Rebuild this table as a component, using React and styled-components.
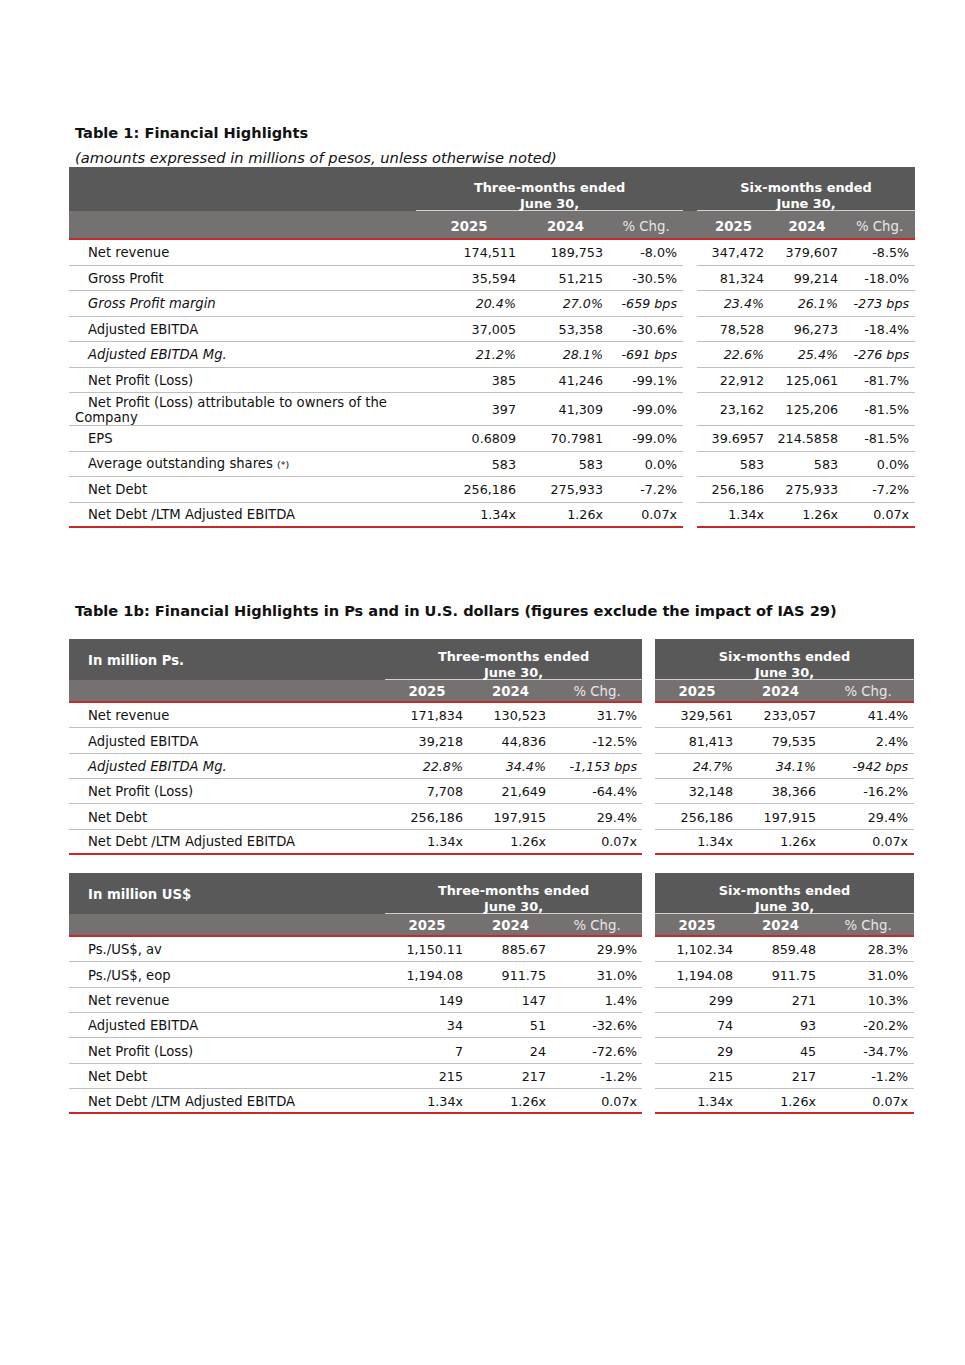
import React from "react";
import styled, { createGlobalStyle, css } from "styled-components";

const GlobalStyle = createGlobalStyle`
  html, body { margin: 0; padding: 0; background: #fff; }
  body { font-family: "DejaVu Sans", Verdana, sans-serif; color: #111; }
`;

const DARK = "#595959";
const LIGHT = "#767171";
const RED = "#c8282a";
const RULE = "#bfbfbf";

const Page = styled.div`
  width: 965px;
  min-height: 1365px;
  box-sizing: border-box;
  padding: 124px 50px 0 69px;
`;

const Title = styled.div`
  font-weight: bold;
  font-size: 14.6px;
  line-height: 18px;
  padding-left: 6px;
  white-space: nowrap;
  margin-top: ${(p) => p.$top || 0}px;
`;

const Subtitle = styled.div`
  font-style: italic;
  font-size: 14.7px;
  line-height: 18px;
  padding-left: 6px;
  white-space: nowrap;
  margin-top: 7px;
`;

const Table = styled.table`
  border-collapse: separate;
  border-spacing: 0;
  table-layout: fixed;
  font-size: 12.7px;
  width: ${(p) => p.$width}px;
`;

const DarkRow = styled.tr`
  background: ${DARK};
  height: ${(p) => p.$h}px;
`;

const LightRow = styled.tr`
  background: ${LIGHT};
  height: ${(p) => p.$h}px;
`;

const GroupHead = styled.th`
  color: #fff;
  font-weight: bold;
  font-size: 12.9px;
  line-height: 16px;
  text-align: center;
  vertical-align: bottom;
  padding: 0;
  border-bottom: 1px solid #d0d0d0;
`;

const GroupText = styled.span`
  display: block;
  margin-bottom: -2px;
`;

const BoxLabel = styled.th`
  color: #fff;
  font-weight: bold;
  font-size: 13.2px;
  text-align: left;
  vertical-align: middle;
  padding: 2px 0 0 19px;
`;

const BlankHead = styled.th`
  padding: 0;
`;

const YearHead = styled.th`
  color: ${(p) => (p.$pct ? "#e6e6e6" : "#fff")};
  font-weight: ${(p) => (p.$pct ? "normal" : "bold")};
  font-size: 13.3px;
  text-align: center;
  padding: ${(p) => p.$pt || 0}px 0 0;
  vertical-align: middle;
  border-bottom: 2px solid ${RED};
`;

const Row = styled.tr`
  height: ${(p) => p.$h}px;
  font-style: ${(p) => (p.$italic ? "italic" : "normal")};
`;

const cellBorder = css`
  border-bottom: ${(p) => (p.$last ? `2px solid ${RED}` : `1px solid ${RULE}`)};
`;

const Label = styled.td`
  text-align: left;
  padding: 1px 0 0 6px;
  text-indent: 13px;
  white-space: nowrap;
  font-size: 13.2px;
  line-height: 15px;
  vertical-align: middle;
  ${cellBorder}
`;

const Num = styled.td`
  text-align: right;
  padding: 1px ${(p) => p.$pr || 6}px 0 0;
  white-space: nowrap;
  vertical-align: middle;
  ${cellBorder}
`;

const GapCell = styled.td`
  padding: 0;
  border: none;
`;

const Note = styled.span`
  font-size: 9.5px;
  font-style: normal;
`;

const Boxes = styled.div`
  display: flex;
  gap: 13px;
  margin-top: ${(p) => p.$top || 0}px;
`;

/* ---------- Data ---------- */

const t1Rows = [
  { label: "Net revenue", v: ["174,511", "189,753", "-8.0%", "347,472", "379,607", "-8.5%"] },
  { label: "Gross Profit", v: ["35,594", "51,215", "-30.5%", "81,324", "99,214", "-18.0%"] },
  { label: "Gross Profit margin", italic: true, v: ["20.4%", "27.0%", "-659 bps", "23.4%", "26.1%", "-273 bps"] },
  { label: "Adjusted EBITDA", v: ["37,005", "53,358", "-30.6%", "78,528", "96,273", "-18.4%"] },
  { label: "Adjusted EBITDA Mg.", italic: true, v: ["21.2%", "28.1%", "-691 bps", "22.6%", "25.4%", "-276 bps"] },
  { label: "Net Profit (Loss)", v: ["385", "41,246", "-99.1%", "22,912", "125,061", "-81.7%"] },
  {
    label: (
      <>
        Net Profit (Loss) attributable to owners of the
        <br />
        Company
      </>
    ),
    tall: true,
    v: ["397", "41,309", "-99.0%", "23,162", "125,206", "-81.5%"],
  },
  { label: "EPS", v: ["0.6809", "70.7981", "-99.0%", "39.6957", "214.5858", "-81.5%"] },
  {
    label: (
      <>
        Average outstanding shares <Note>(*)</Note>
      </>
    ),
    v: ["583", "583", "0.0%", "583", "583", "0.0%"],
  },
  { label: "Net Debt", v: ["256,186", "275,933", "-7.2%", "256,186", "275,933", "-7.2%"] },
  { label: "Net Debt /LTM Adjusted EBITDA", v: ["1.34x", "1.26x", "0.07x", "1.34x", "1.26x", "0.07x"] },
];

const psRows = [
  { label: "Net revenue", v: ["171,834", "130,523", "31.7%", "329,561", "233,057", "41.4%"] },
  { label: "Adjusted EBITDA", v: ["39,218", "44,836", "-12.5%", "81,413", "79,535", "2.4%"] },
  { label: "Adjusted EBITDA Mg.", italic: true, v: ["22.8%", "34.4%", "-1,153 bps", "24.7%", "34.1%", "-942 bps"] },
  { label: "Net Profit (Loss)", v: ["7,708", "21,649", "-64.4%", "32,148", "38,366", "-16.2%"] },
  { label: "Net Debt", v: ["256,186", "197,915", "29.4%", "256,186", "197,915", "29.4%"] },
  { label: "Net Debt /LTM Adjusted EBITDA", v: ["1.34x", "1.26x", "0.07x", "1.34x", "1.26x", "0.07x"] },
];

const usRows = [
  { label: "Ps./US$, av", v: ["1,150.11", "885.67", "29.9%", "1,102.34", "859.48", "28.3%"] },
  { label: "Ps./US$, eop", v: ["1,194.08", "911.75", "31.0%", "1,194.08", "911.75", "31.0%"] },
  { label: "Net revenue", v: ["149", "147", "1.4%", "299", "271", "10.3%"] },
  { label: "Adjusted EBITDA", v: ["34", "51", "-32.6%", "74", "93", "-20.2%"] },
  { label: "Net Profit (Loss)", v: ["7", "24", "-72.6%", "29", "45", "-34.7%"] },
  { label: "Net Debt", v: ["215", "217", "-1.2%", "215", "217", "-1.2%"] },
  { label: "Net Debt /LTM Adjusted EBITDA", v: ["1.34x", "1.26x", "0.07x", "1.34x", "1.26x", "0.07x"] },
];

function PeriodHead({ children }) {
  return (
    <GroupHead colSpan={3}>
      <GroupText>
        {children}
        <br />
        June 30,
      </GroupText>
    </GroupHead>
  );
}

/* ---------- Table 1 ---------- */

function HighlightsTable() {
  const cols = [347, 106, 87, 74, 14, 73, 74, 71];
  return (
    <Table $width={846}>
      <colgroup>
        {cols.map((w, i) => (
          <col key={i} style={{ width: w }} />
        ))}
      </colgroup>
      <thead>
        <DarkRow $h={44}>
          <BlankHead />
          <PeriodHead>Three-months ended</PeriodHead>
          <BlankHead />
          <PeriodHead>Six-months ended</PeriodHead>
        </DarkRow>
        <LightRow $h={29}>
          <YearHead />
          <YearHead $pt={3}>2025</YearHead>
          <YearHead $pt={3}>2024</YearHead>
          <YearHead $pt={3} $pct>% Chg.</YearHead>
          <YearHead />
          <YearHead $pt={3}>2025</YearHead>
          <YearHead $pt={3}>2024</YearHead>
          <YearHead $pt={3} $pct>% Chg.</YearHead>
        </LightRow>
      </thead>
      <tbody>
        {t1Rows.map((r, i) => {
          const last = i === t1Rows.length - 1;
          return (
            <Row key={i} $h={r.tall ? 33 : 25.5} $italic={r.italic}>
              <Label $last={last}>{r.label}</Label>
              <Num $last={last}>{r.v[0]}</Num>
              <Num $last={last}>{r.v[1]}</Num>
              <Num $last={last}>{r.v[2]}</Num>
              <GapCell />
              <Num $last={last}>{r.v[3]}</Num>
              <Num $last={last}>{r.v[4]}</Num>
              <Num $last={last}>{r.v[5]}</Num>
            </Row>
          );
        })}
      </tbody>
    </Table>
  );
}

/* ---------- Table 1b boxes ---------- */

function LeftBox({ title, rows }) {
  const cols = [316, 84, 83, 90];
  return (
    <Table $width={573}>
      <colgroup>
        {cols.map((w, i) => (
          <col key={i} style={{ width: w }} />
        ))}
      </colgroup>
      <thead>
        <DarkRow $h={41}>
          <BoxLabel>{title}</BoxLabel>
          <PeriodHead>Three-months ended</PeriodHead>
        </DarkRow>
        <LightRow $h={23}>
          <YearHead />
          <YearHead $pt={1}>2025</YearHead>
          <YearHead $pt={1}>2024</YearHead>
          <YearHead $pt={1} $pct>% Chg.</YearHead>
        </LightRow>
      </thead>
      <tbody>
        {rows.map((r, i) => {
          const last = i === rows.length - 1;
          return (
            <Row key={i} $h={25.35} $italic={r.italic}>
              <Label $last={last}>{r.label}</Label>
              <Num $last={last}>{r.v[0]}</Num>
              <Num $last={last}>{r.v[1]}</Num>
              <Num $last={last} $pr={5}>{r.v[2]}</Num>
            </Row>
          );
        })}
      </tbody>
    </Table>
  );
}

function RightBox({ rows }) {
  const cols = [84, 83, 92];
  return (
    <Table $width={259}>
      <colgroup>
        {cols.map((w, i) => (
          <col key={i} style={{ width: w }} />
        ))}
      </colgroup>
      <thead>
        <DarkRow $h={41}>
          <PeriodHead>Six-months ended</PeriodHead>
        </DarkRow>
        <LightRow $h={23}>
          <YearHead $pt={1}>2025</YearHead>
          <YearHead $pt={1}>2024</YearHead>
          <YearHead $pt={1} $pct>% Chg.</YearHead>
        </LightRow>
      </thead>
      <tbody>
        {rows.map((r, i) => {
          const last = i === rows.length - 1;
          return (
            <Row key={i} $h={25.35} $italic={r.italic}>
              <Num $last={last}>{r.v[3]}</Num>
              <Num $last={last}>{r.v[4]}</Num>
              <Num $last={last}>{r.v[5]}</Num>
            </Row>
          );
        })}
      </tbody>
    </Table>
  );
}

function Section({ title, rows, top }) {
  return (
    <Boxes $top={top}>
      <LeftBox title={title} rows={rows} />
      <RightBox rows={rows} />
    </Boxes>
  );
}

export default function App() {
  return (
    <>
      <GlobalStyle />
      <Page>
        <Title>Table 1: Financial Highlights</Title>
        <Subtitle>(amounts expressed in millions of pesos, unless otherwise noted)</Subtitle>
        <HighlightsTable />
        <Title $top={74}>
          Table 1b: Financial Highlights in Ps and in U.S. dollars (figures exclude the impact of IAS 29)
        </Title>
        <Section title="In million Ps." rows={psRows} top={19} />
        <Section title="In million US$" rows={usRows} top={18} />
      </Page>
    </>
  );
}
